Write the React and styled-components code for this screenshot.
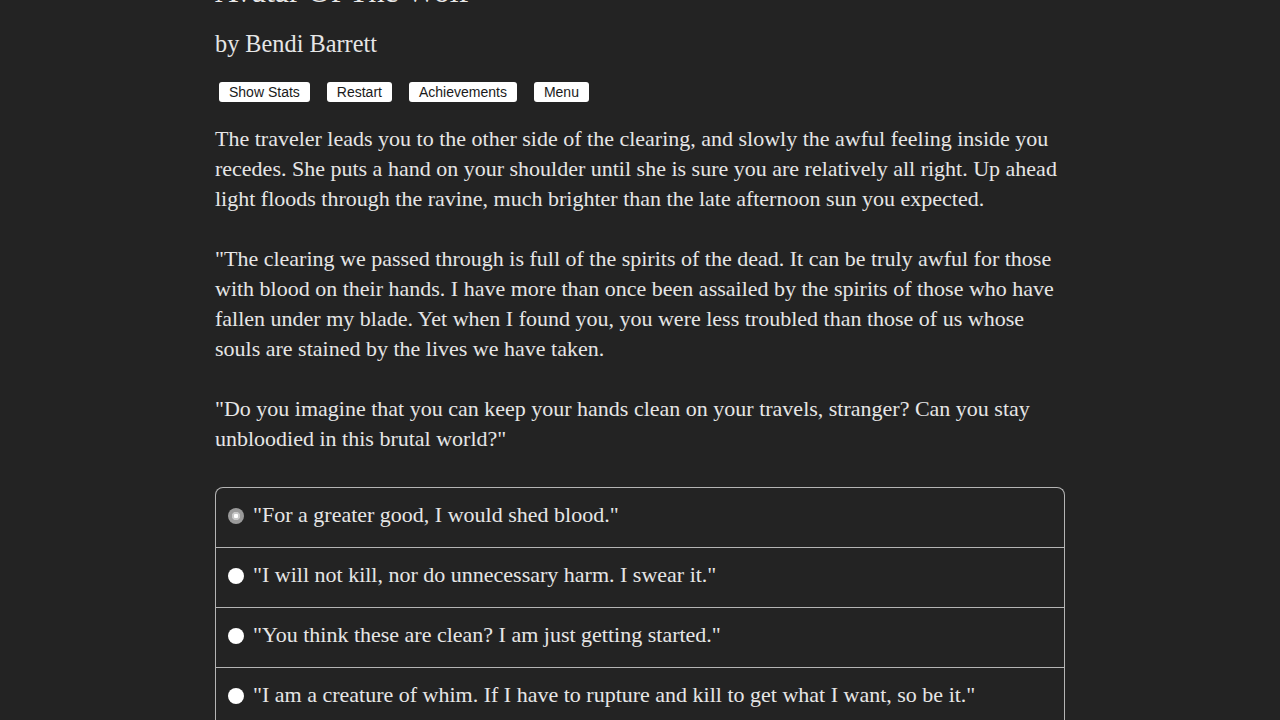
import React from 'react';
import styled, { createGlobalStyle } from 'styled-components';

const GlobalStyle = createGlobalStyle`
  body {
    margin: 0;
    background-color: #232323;
    color: #e6e6e6;
  }
`;

const Page = styled.main`
  width: 850px;
  margin: 0 auto;
  font-family: "Liberation Serif", "Times New Roman", serif;
`;

const Title = styled.h1`
  margin: -25px 0 0;
  font-size: 32px;
  font-weight: normal;
  line-height: 1;
  color: #e8e8e8;
`;

const Byline = styled.h2`
  margin: 22px 0 0;
  font-size: 24.3px;
  font-weight: normal;
  line-height: 30px;
`;

const Toolbar = styled.div`
  display: flex;
  gap: 17px;
  margin: 23px 0 0 4px;
`;

const Button = styled.button`
  height: 20px;
  padding: 0 10px;
  border: none;
  border-radius: 3px;
  background: #fff;
  color: #1a1a1a;
  font-family: "Liberation Sans", Arial, sans-serif;
  font-size: 14px;
  line-height: 20px;
`;

const Text = styled.div`
  margin-top: 22px;
  font-size: 22px;
  line-height: 30px;

  p {
    margin: 0 0 30px;
  }

  p:last-child {
    margin-bottom: 0;
  }
`;

const Choices = styled.div`
  margin-top: 33px;
  border: 1px solid #b4b4b4;
  border-bottom: none;
  border-radius: 8px 8px 0 0;
`;

const Choice = styled.label`
  display: flex;
  align-items: center;
  gap: 9px;
  padding: 12px 12px 17px;
  font-size: 22px;
  line-height: 30px;
  border-top: ${p => (p.first ? 'none' : '1px solid #b4b4b4')};
`;

const Radio = styled.span`
  flex: none;
  width: 16px;
  height: 16px;
  border-radius: 50%;
  margin-top: 2px;
  background: ${p =>
    p.active
      ? 'radial-gradient(circle, #fff 0 2px, #c8c8c8 2.5px 4px, #9a9a9a 4.5px)'
      : '#fff'};
`;

const choices = [
  '"For a greater good, I would shed blood."',
  '"I will not kill, nor do unnecessary harm. I swear it."',
  '"You think these are clean? I am just getting started."',
  '"I am a creature of whim. If I have to rupture and kill to get what I want, so be it."',
];

const App = () => (
  <Page>
    <GlobalStyle />
    <Title>Avatar Of The Wolf</Title>
    <Byline>by Bendi Barrett</Byline>
    <Toolbar>
      <Button>Show Stats</Button>
      <Button>Restart</Button>
      <Button>Achievements</Button>
      <Button>Menu</Button>
    </Toolbar>
    <Text>
      <p>
        The traveler leads you to the other side of the clearing, and slowly the awful feeling inside you
        recedes. She puts a hand on your shoulder until she is sure you are relatively all right. Up ahead
        light floods through the ravine, much brighter than the late afternoon sun you expected.
      </p>
      <p>
        "The clearing we passed through is full of the spirits of the dead. It can be truly awful for those
        with blood on their hands. I have more than once been assailed by the spirits of those who have
        fallen under my blade. Yet when I found you, you were less troubled than those of us whose souls
        are stained by the lives we have taken.
      </p>
      <p>
        "Do you imagine that you can keep your hands clean on your travels, stranger? Can you stay
        unbloodied in this brutal world?"
      </p>
    </Text>
    <Choices>
      {choices.map((c, i) => (
        <Choice key={i} first={i === 0}>
          <Radio active={i === 0} />
          {c}
        </Choice>
      ))}
    </Choices>
  </Page>
);

export default App;
